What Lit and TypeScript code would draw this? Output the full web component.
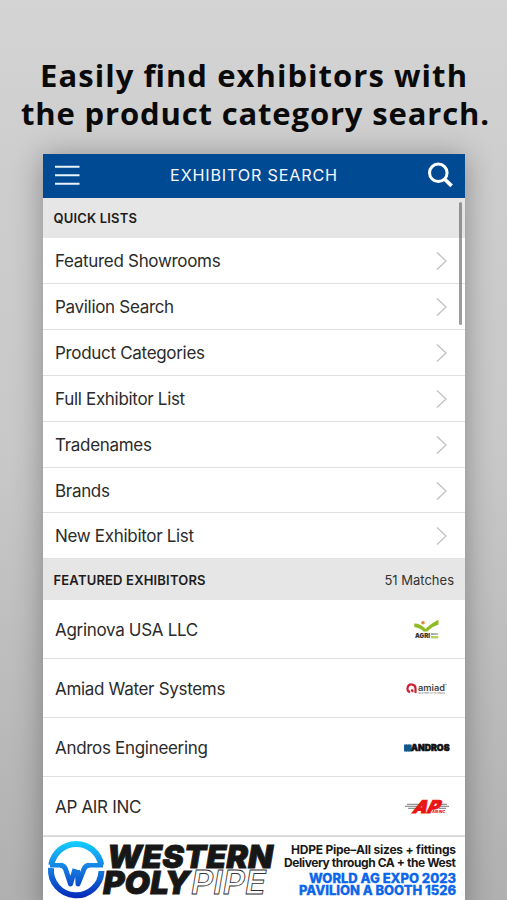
import { LitElement, html, svg, css } from "lit";
import { customElement } from "lit/decorators.js";

const quickLists = [
  "Featured Showrooms",
  "Pavilion Search",
  "Product Categories",
  "Full Exhibitor List",
  "Tradenames",
  "Brands",
  "New Exhibitor List",
];

const agri = svg`
  <path d="M0.300 4.500Q7 4.500 11.500 10Q16 5 24.500 0.700V5.500Q17 8 13.500 12.500H9.500Q7 9 0.300 8Z" fill="#8fbb22"/>
  <circle cx="9" cy="3.800" r="1.800" fill="#e0863a"/>
  <text x="1" y="19.300" class="lg" font-size="6.600" font-weight="900" textLength="15" lengthAdjust="spacingAndGlyphs" fill="#333">AGRI</text>
  <text x="17" y="16.400" class="lg" font-size="2.600" font-weight="700" textLength="7" lengthAdjust="spacingAndGlyphs" fill="#555">NOVA</text>
  <rect x="17" y="17" width="7.300" height="2.400" fill="#b5d455"/>`;

const amiad = svg`
  <path d="M4 10.200A4 4 0 1 1 9.500 6.500V11M5.500 7.500L7 9.800" fill="none" stroke="#cf2032" stroke-width="2.200"/>
  <text x="12" y="8.500" class="lg" font-size="9" font-weight="600" textLength="27" lengthAdjust="spacingAndGlyphs" fill="#454545">amiad</text>
  <text x="12" y="11.600" class="lg" font-size="2.300" textLength="27" lengthAdjust="spacingAndGlyphs" fill="#777">WATER SYSTEMS</text>
  <circle cx="40" cy="2.500" r=".7" fill="#888"/>`;

const andros = svg`
  <rect x="0" y="0.500" width="7.600" height="7" fill="#17649c"/>
  <path d="M0 2.200H8M0 4.100H8M0 6H8M2.500 0V8M5 0V8" stroke="#0d4674" stroke-width=".5"/>
  <text x="7" y="7.300" class="lg" font-size="8.800" font-weight="900" textLength="38.500" lengthAdjust="spacingAndGlyphs" fill="#111" stroke="#111" stroke-width=".6">ANDROS</text>`;

const apair = svg`
  <path d="M2 5.300H18M0 7.300H16M3 9.300H15M34 5.300H42M34 7.300H44M34 9.300H41" stroke="#777" stroke-width="1"/>
  <text transform="translate(6.500 14) skewX(-26)" class="lg" font-size="17.500" font-weight="900" textLength="26" lengthAdjust="spacingAndGlyphs" fill="#ea1414" stroke="#ea1414" stroke-width=".9">AP</text>
  <text x="27" y="14" class="lg" font-size="3.600" font-weight="900" font-style="italic" textLength="13" lengthAdjust="spacingAndGlyphs" fill="#ea1414">AIR INC</text>`;

const exhibitors = [
  { name: "Agrinova USA LLC", w: 26, h: 21, right: 25, logo: agri },
  { name: "Amiad Water Systems", w: 41, h: 13, right: 18, logo: amiad },
  { name: "Andros Engineering", w: 46, h: 8, right: 15, logo: andros },
  { name: "AP AIR INC", w: 44, h: 15, right: 16, logo: apair },
];

@customElement("app-root")
export class AppRoot extends LitElement {
  static styles = css`
    :host {
      display: block;
      height: 900px;
      overflow: hidden;
      background: linear-gradient(#d4d4d4, #cdcdcd 20%, #c8c8c8 50%, #b0b0b0 100%);
      font-family: Inter, "Liberation Sans", sans-serif;
      color: #2b2b2b;
    }
    svg { display: block; overflow: visible; flex: none; }
    .lg { font-family: Inter, sans-serif; }
    .headline {
      margin: 0;
      height: 153.5px;
      padding-top: 57px;
      box-sizing: border-box;
    }
    .hl { font: 700 31px "Open Sans", sans-serif; fill: #0a0a0a; }
    .phone {
      width: 422px;
      height: 760px;
      margin-left: 43px;
      background: #fff;
      box-shadow: 0 2px 28px 0 rgba(0, 0, 0, 0.32);
      display: flex;
      flex-direction: column;
      position: relative;
    }
    .bar {
      height: 44px;
      flex: none;
      box-sizing: border-box;
      background: #004a93;
      color: #f4f8fc;
      display: flex;
      align-items: center;
      justify-content: space-between;
      padding: 0 12px;
      font-size: 16.2px;
    }
    .title { letter-spacing: 0.8px; padding-bottom: 2px; }
    .section {
      flex: none;
      box-sizing: border-box;
      background: #e6e6e6;
      display: flex;
      align-items: center;
      justify-content: space-between;
      padding: 0 11px 0 10.5px;
      font-size: 13px;
      color: #333;
      height: 40.9px;
    }
    .section b { font-weight: 600; color: #1c1c1c; letter-spacing: 0.18px; }
    .row {
      flex: none;
      box-sizing: border-box;
      border-bottom: 1px solid #e0e0e0;
      display: flex;
      align-items: center;
      justify-content: space-between;
      padding: 1px 18px 0 12px;
      font-size: 17px;
      letter-spacing: -0.31px;
      height: 45.85px;
    }
    .row svg { letter-spacing: 0; }
    .tall { height: 59px; padding-right: 0; }
    .scroll {
      position: absolute;
      right: 3px;
      top: 48px;
      width: 3px;
      height: 123px;
      border-radius: 2px;
      background: rgba(90, 90, 90, 0.6);
    }
    .banner { display: flex; border-top: 1px solid #d6d6d6; flex: 1; }
    .brand { font: italic 900 32px Inter, sans-serif; }
    .outline { font-weight: 600; }
    .info { font: 700 12px Inter, sans-serif; fill: #191919; }
    .promo { font: 800 12.5px Inter, sans-serif; fill: #0b66ea; stroke: #0b66ea; stroke-width: 0.3; }
  `;

  render() {
    return html`
      <h1 class="headline">
        <svg width="507" height="90">
          <text class="hl" x="40" y="30" textLength="427">Easily ﬁnd exhibitors with</text>
          <text class="hl" x="21" y="68" textLength="468">the product category search.</text>
        </svg>
      </h1>
      <main class="phone">
        <header class="bar">
          <svg width="25" height="20"><path d="M0 .8H24.500M0 9.300H24.500M0 17.700H24.500" stroke="#e9f3fc" stroke-width="2"/></svg>
          <span class="title">EXHIBITOR SEARCH</span>
          <svg width="25" height="25"><circle cx="10.300" cy="9.800" r="8.800" fill="none" stroke="#fff" stroke-width="3"/><path d="M16.500 16L23.600 22.800" stroke="#fff" stroke-width="3.800"/></svg>
        </header>
        <div class="section"><b>QUICK LISTS</b></div>
        ${quickLists.map((t) => html`
          <div class="row"><span>${t}</span>
            <svg width="11" height="18"><path d="M1 .5L10 9L1 17.500" fill="none" stroke="#c2c2c2" stroke-width="1.300"/></svg>
          </div>`)}
        <div class="section"><b>FEATURED EXHIBITORS</b><span>51 Matches</span></div>
        ${exhibitors.map((e) => html`
          <div class="row tall"><span>${e.name}</span>
            <svg width=${e.w} height=${e.h} style="margin-right:${e.right}px">${e.logo}</svg>
          </div>`)}
        <footer class="banner">
          <svg width="422" height="62">
            <defs>
              <linearGradient id="ring" gradientUnits="userSpaceOnUse" x1="0" y1="4" x2="0" y2="62">
                <stop offset="0" stop-color="#14d0ff"/><stop offset=".45" stop-color="#1681e2"/><stop offset="1" stop-color="#0426b8"/>
              </linearGradient>
            </defs>
            <g fill="none" stroke="url(#ring)">
              <path d="M8.300 28A25.300 25.300 0 0 1 58.200 28M58.500 34A25.300 25.300 0 1 1 8 31" stroke-width="6"/>
              <path d="M7 28.300H19M46 28.300H60" stroke-width="4.600"/>
              <path d="M17 28.300Q21 28.300 22.500 32L27.500 47L32 32M34.500 33L35 47L41 32Q42.500 28.300 46.500 28.300" stroke-width="5" stroke-linejoin="round"/>
            </g>
            <text class="brand" x="64" y="31" textLength="166" lengthAdjust="spacingAndGlyphs" fill="#171717" stroke="#171717" stroke-width=".8">WESTERN</text>
            <text class="brand" x="60" y="57.300" textLength="87" lengthAdjust="spacingAndGlyphs" fill="#171717" stroke="#171717" stroke-width=".8">POLY</text>
            <text class="brand outline" x="148" y="57.300" textLength="75" lengthAdjust="spacingAndGlyphs" fill="#fff" stroke="#333" stroke-width=".8">PIPE</text>
            <text class="info" x="248" y="17" textLength="165">HDPE Pipe–All sizes + fittings</text>
            <text class="info" x="241" y="29.500" textLength="172">Delivery through CA + the West</text>
            <text class="promo" x="266" y="45.500" textLength="147" lengthAdjust="spacingAndGlyphs">WORLD AG EXPO 2023</text>
            <text class="promo" x="256" y="57.500" textLength="157" lengthAdjust="spacingAndGlyphs">PAVILION A BOOTH 1526</text>
          </svg>
        </footer>
        <div class="scroll"></div>
      </main>
    `;
  }
}
